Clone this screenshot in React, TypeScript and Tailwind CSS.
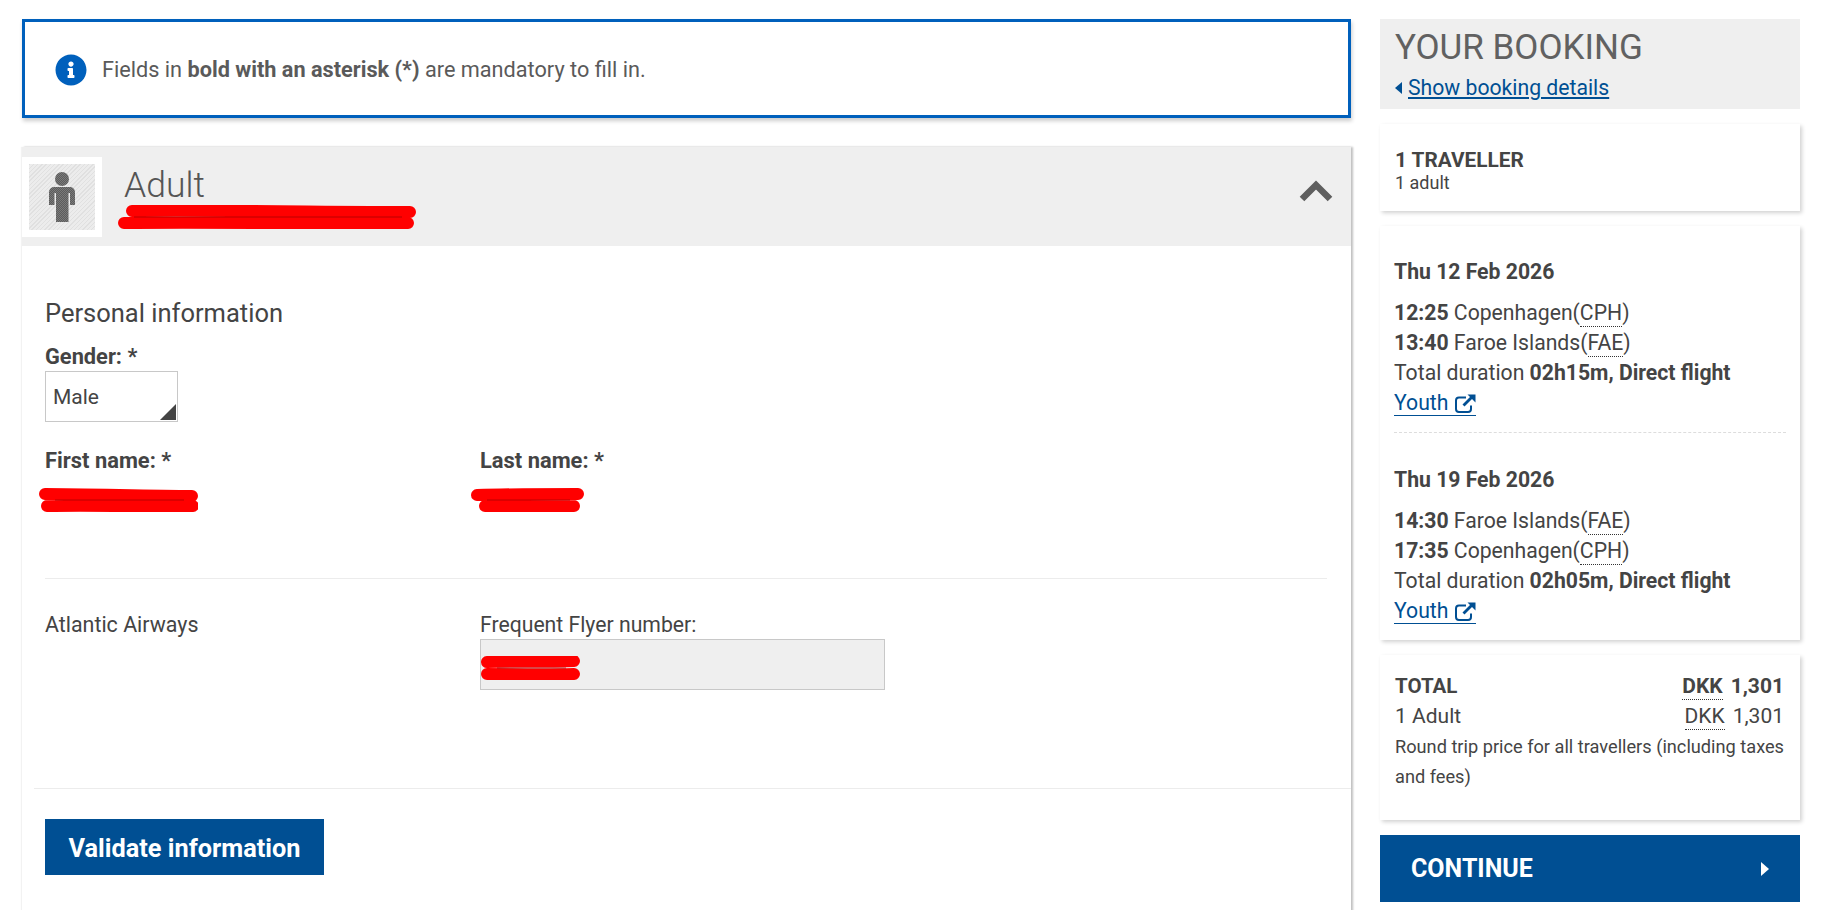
import type { ReactNode } from "react";
import { FaInfoCircle } from "react-icons/fa";

function Scribble({ w, d, className = "" }: { w: number; d: string; className?: string }) {
  return (
    <svg width={w} height={24} viewBox={`0 0 ${w} 24`} className={`block ${className}`} fill="none">
      <path d={d} stroke="#ff0000" strokeWidth="12" strokeLinecap="round" strokeLinejoin="round" />
      <path d={`M16 12H${w - 14}`} stroke="#a80000" strokeWidth="0.8" />
    </svg>
  );
}

function Ext() {
  return (
    <svg width="21" height="19" viewBox="0 0 21 19" fill="none" stroke="#004f93" className="ml-[7px] mb-[2px]">
      <path d="M11 3.5H4a3 3 0 0 0-3 3V15a3 3 0 0 0 3 3h9a3 3 0 0 0 3-3v-3.5" strokeWidth="2" />
      <path d="M8.5 11.5 17 3" strokeWidth="2.8" />
      <path d="M12.5 0.5h8v8z" fill="#004f93" stroke="none" />
    </svg>
  );
}

function Abbr({ children }: { children: ReactNode }) {
  return <span className="border-b border-dotted border-[#333] pb-[1px]">{children}</span>;
}

function Leg({ date, a, b, dur, className }: { date: string; a: ReactNode; b: ReactNode; dur: string; className: string }) {
  return (
    <div className={`text-[21.2px] leading-[30px] ${className}`}>
      <div className="font-bold mb-[11px]">{date}</div>
      <div>{a}</div>
      <div>{b}</div>
      <div>
        Total duration <b>{dur}, Direct flight</b>
      </div>
      <div className="h-[30px] flex items-start">
        <a className="inline-flex items-end h-[28px] text-[#004f93] border-b border-[#004f93]">
          <span className="leading-[24px]">Youth</span>
          <Ext />
        </a>
      </div>
    </div>
  );
}

const cardShadow = "bg-white shadow-[2px_2px_4px_rgba(0,0,0,0.18)]";

export default function App() {
  return (
    <div className="h-[910px] w-[1826px] overflow-hidden bg-white flex text-[#444] font-['Roboto',sans-serif]">
      <main className="ml-[22px] mt-[19px] w-[1329px] shrink-0">
        <div className="h-[99px] border-[3px] border-[#0060bc] shadow-[1px_3px_4px_rgba(0,0,0,0.2)] flex items-center pl-[30px]">
          <FaInfoCircle className="text-[#0060bc] shrink-0 mt-[2px]" size={32} />
          <p className="ml-[15px] mt-[4px] text-[21.7px] text-[#5a5a5a]">
            Fields in <b>bold with an asterisk (*)</b> are mandatory to fill in.
          </p>
        </div>

        <section className="mt-[29px] h-[800px] shadow-[2px_0_2px_rgba(0,0,0,0.25),-1px_0_1px_rgba(0,0,0,0.05)]">
          <header className="h-[99px] bg-[#efefef] flex items-center relative">
            <div className="w-[80px] h-[80px] bg-white flex items-center justify-center shrink-0">
              <div className="w-[66px] h-[66px] bg-[repeating-linear-gradient(135deg,#e0e0e0_0,#e0e0e0_1px,#ececec_1px,#ececec_3px)] flex items-center justify-center">
                <svg width="26" height="50" viewBox="0 0 26 50">
                  <defs>
                    <pattern id="chk" width="2" height="2" patternUnits="userSpaceOnUse">
                      <rect width="2" height="2" fill="#7a7a7a" />
                      <rect width="1" height="1" fill="#5c5c5c" />
                      <rect x="1" y="1" width="1" height="1" fill="#5c5c5c" />
                    </pattern>
                  </defs>
                  <circle cx="13" cy="7" r="7" fill="url(#chk)" />
                  <path fill="url(#chk)" d="M5 15h16a5 5 0 0 1 5 5v13h-5V21h-1.500v29H7V21H5.500v12H0V20a5 5 0 0 1 5-5z" />
                </svg>
              </div>
            </div>
            <div className="ml-[22px] mt-[-3px]">
              <h2 className="mt-[4px] text-[35.500px] leading-[40px] font-light text-[#555]">Adult</h2>
              <Scribble w={298} className="ml-[-6px]" d="M14 6 C80 5 220 7 292 7 M6 18 C90 17 230 19 290 18" />
            </div>
            <svg width="34" height="22" viewBox="0 0 34 22" className="absolute right-[18px] top-[33px]" fill="none" stroke="#5f5f5f" strokeWidth="6.5">
              <path d="M3 19 17 5l14 14" />
            </svg>
          </header>

          <div className="pl-[23px] pr-[24px]">
            <h3 className="pt-[51px] text-[25.500px] leading-[32px] font-normal text-[#444]">Personal information</h3>
            <div className="mt-[16px] text-[21.8px] leading-[24px] font-bold">Gender: *</div>
            <div className="relative mt-[2px] w-[133px] h-[51px] border border-[#c8c8c8] flex items-center pl-[7px] pt-[2px] text-[21px] text-[#444]">
              Male
              <span className="absolute right-[1px] bottom-[1px] w-0 h-0 border-b-[16px] border-l-[16px] border-b-[#444] border-l-transparent" />
            </div>

            <div className="grid grid-cols-[435px_1fr] mt-[27px]">
              <div>
                <div className="text-[21.9px] leading-[24px] font-bold">First name: *</div>
                <Scribble w={159} className="ml-[-6px] mt-[15px]" d="M6 6 C50 6 110 8 153 8 M8 18 C60 17 120 19 154 18" />
              </div>
              <div>
                <div className="text-[21.9px] leading-[24px] font-bold">Last name: *</div>
                <Scribble w={113} className="ml-[-9px] mt-[15px]" d="M6 7 C40 6 80 6 107 6 M14 18 C50 18 80 18 103 18" />
              </div>
            </div>

            <div className="mt-[66px] border-t border-[#ececec]" />

            <div className="grid grid-cols-[435px_1fr] mt-[34px]">
              <div className="text-[21.4px] leading-[24px]">Atlantic Airways</div>
              <div>
                <div className="text-[21.2px] leading-[24px]">Frequent Flyer number:</div>
                <div className="mt-[2px] w-[405px] h-[51px] bg-[#efefef] border border-[#c8c8c8] pt-[16px]">
                  <Scribble w={99} d="M6 6 C30 5 60 6 93 5 M6 18 C30 18 60 19 93 18" />
                </div>
              </div>
            </div>
          </div>

          <div className="ml-[12px] mt-[98px] border-t border-[#ececec]" />

          <button className="ml-[23px] mt-[30px] w-[279px] h-[56px] bg-[#004f93] text-white font-bold text-[25.3px] flex items-center justify-center pt-[4px]">
            Validate information
          </button>
        </section>
      </main>

      <aside className="ml-[29px] mt-[19px] w-[420px] shrink-0">
        <div className="h-[90px] bg-[#efefef] pl-[15px] pt-[6px]">
          <div className="text-[35px] leading-[46px] text-[#616161]">YOUR BOOKING</div>
          <div className="flex items-center text-[21.2px] leading-[24px] mt-[5px]">
            <span className="w-0 h-0 border-y-[6.500px] border-y-transparent border-r-[7px] border-r-[#004f93] mr-[6px]" />
            <a className="text-[#004f93] underline underline-offset-2">Show booking details</a>
          </div>
        </div>

        <div className={`${cardShadow} mt-[15px] h-[87px] pl-[15px] pt-[24px]`}>
          <div className="text-[20.800px] leading-[24px] font-bold">1 TRAVELLER</div>
          <div className="text-[18px] leading-[20px] mt-[1px]">1 adult</div>
        </div>

        <div className={`${cardShadow} mt-[15px] h-[414px] px-[14px] pt-[31px]`}>
          <Leg
            className=""
            date="Thu 12 Feb 2026"
            a={<><b>12:25</b> Copenhagen(<Abbr>CPH</Abbr>)</>}
            b={<><b>13:40</b> Faroe Islands(<Abbr>FAE</Abbr>)</>}
            dur="02h15m"
          />
          <div className="mt-[14px] border-t border-dashed border-[#ddd]" />
          <Leg
            className="pt-[32px]"
            date="Thu 19 Feb 2026"
            a={<><b>14:30</b> Faroe Islands(<Abbr>FAE</Abbr>)</>}
            b={<><b>17:35</b> Copenhagen(<Abbr>CPH</Abbr>)</>}
            dur="02h05m"
          />
        </div>

        <div className={`${cardShadow} mt-[15px] h-[165px] pl-[15px] pr-[16px] pt-[17px]`}>
          <div className="flex justify-between text-[21px] leading-[29px] font-bold">
            <span className="text-[20.500px]">TOTAL</span>
            <span><Abbr>DKK</Abbr><span className="ml-[8px]">1,301</span></span>
          </div>
          <div className="flex justify-between text-[21px] leading-[30px]">
            <span>1 Adult</span>
            <span><Abbr>DKK</Abbr><span className="ml-[8px]">1,301</span></span>
          </div>
          <p className="mt-[1px] text-[18.2px] leading-[30px]">Round trip price for all travellers (including taxes and fees)</p>
        </div>

        <button className="mt-[15px] w-full h-[67px] bg-[#004f93] text-white font-bold text-[25px] flex items-center justify-between pl-[31px] pr-[31px]">
          CONTINUE
          <span className="w-0 h-0 border-y-[7px] border-y-transparent border-l-[8px] border-l-white" />
        </button>
      </aside>
    </div>
  );
}
